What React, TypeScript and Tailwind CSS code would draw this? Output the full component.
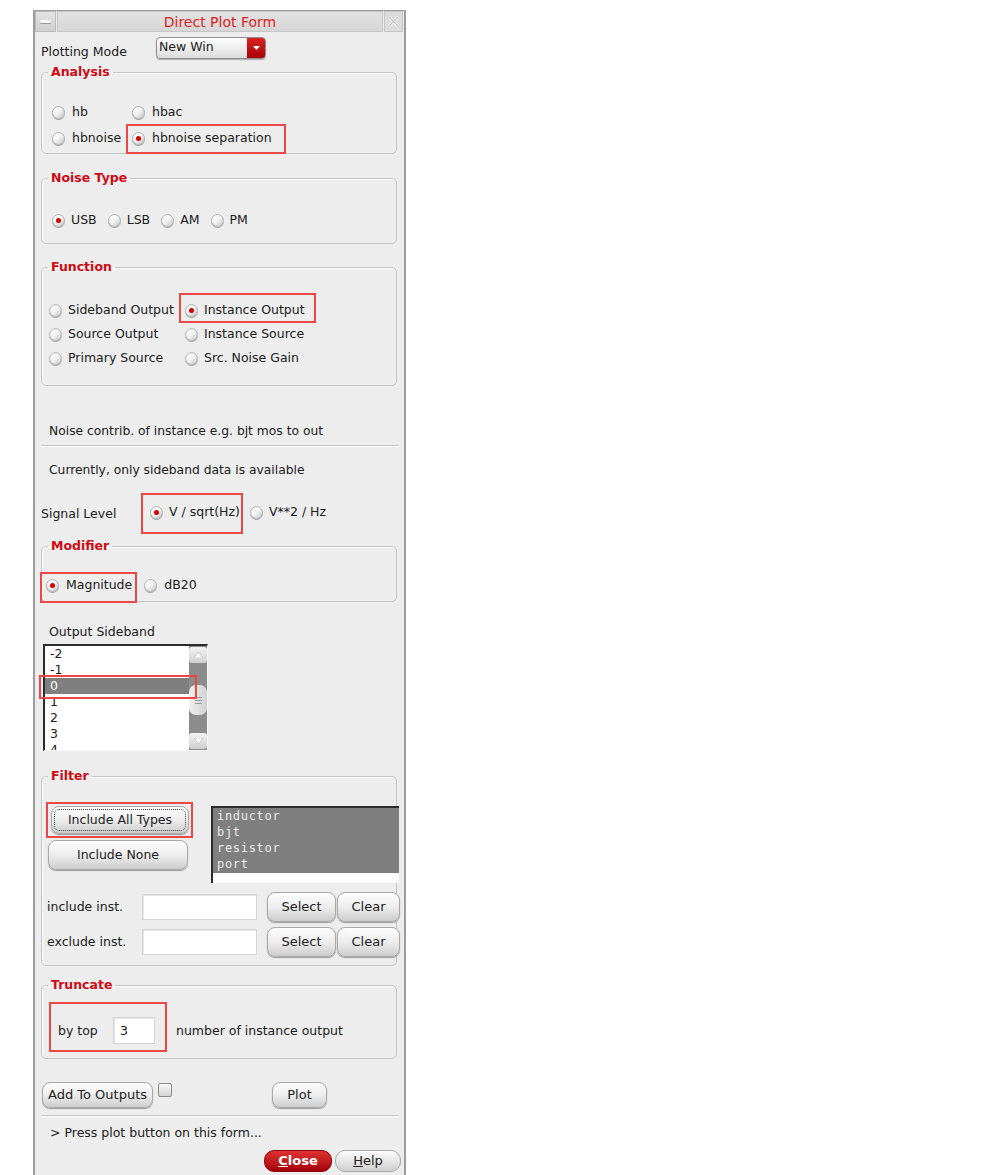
import React from "react";

function Radio({ on = false }: { on?: boolean }) {
  return (
    <span className="flex h-[13px] w-[13px] shrink-0 items-center justify-center rounded-full border border-[#b2b2b2] bg-linear-to-br from-white via-[#f2f2f2] to-[#c4c4c4] shadow-[0_1px_0_#a0a0a0]">
      {on && <span className="h-[5px] w-[5px] rounded-full bg-[#d40000]" />}
    </span>
  );
}

function Option({ label, on = false, gap = "gap-[7px]" }: { label: string; on?: boolean; gap?: string }) {
  return (
    <span className={`flex h-[16px] items-center whitespace-nowrap ${gap}`}>
      <Radio on={on} />
      <span>{label}</span>
    </span>
  );
}

// red annotation box drawn over an item
function Mark({ children, box }: { children: React.ReactNode; box: string }) {
  return (
    <span className="relative inline-flex items-center">
      {children}
      <span className={`pointer-events-none absolute border-2 border-[#ec4747] ${box}`} />
    </span>
  );
}

function Group({ title, className = "", children }: { title: string; className?: string; children: React.ReactNode }) {
  return (
    <fieldset className={`rounded-[5px] border border-[#c4c4c4] shadow-[inset_1px_1px_0_#fafafa] ${className}`}>
      <legend className="ml-[6px] px-[3px] text-[12.5px] font-bold leading-[16px] text-[#cc0a14]">{title}</legend>
      {children}
    </fieldset>
  );
}

function Btn({ className = "", children }: { className?: string; children: React.ReactNode }) {
  return (
    <button
      type="button"
      className={`flex items-center justify-center rounded-[8px] border border-[#a8a8a8] bg-linear-to-b from-[#fdfdfd] via-[#ededed] to-[#cdcdcd] text-[12.5px] text-[#222] shadow-[0_1px_1px_#9c9c9c] ${className}`}
    >
      {children}
    </button>
  );
}

function Field({ className = "", value = "" }: { className?: string; value?: string }) {
  return (
    <div className={`flex items-center border border-[#d6d6d6] bg-white pl-[6px] text-[12.5px] shadow-[inset_1px_1px_0_#e4e4e4] ${className}`}>
      {value}
    </div>
  );
}

export default function App() {
  const sidebands = ["-2", "-1", "0", "1", "2", "3", "4"];
  const types = ["inductor", "bjt", "resistor", "port"];

  return (
    <div className="h-[1175px] w-[989px] overflow-hidden bg-white font-['DejaVu_Sans','Liberation_Sans',sans-serif] text-[12.5px] leading-[16px] text-[#202020]">
      <div className="ml-[33px] mt-[10px] min-h-[1165px] w-[373px] border-x-2 border-t border-[#9c9c9c] bg-[#ededed]">
        {/* Title bar */}
        <div className="flex h-[21px]">
          <div className="flex w-[21px] items-center justify-center border border-[#bcbcbc] bg-linear-to-b from-[#e4e4e4] to-[#cecece]">
            <span className="h-[3px] w-[11px] rounded-[1px] bg-[#f6f6f6] shadow-[0_1px_0_#9a9a9a]" />
          </div>
          <div className="ml-[1px] flex flex-1 items-center justify-center border border-[#c6c6c6] bg-linear-to-b from-[#e2e2e2] to-[#d6d6d6] text-[14px] text-[#dc1e26]">
            Direct Plot Form
          </div>
          <div className="ml-[1px] mr-[1px] flex w-[19px] items-center justify-center border border-[#c6c6c6] bg-[#dcdcdc]">
            <svg width="13" height="13" viewBox="0 0 13 13">
              <path d="M2 2 L11 11 M11 2 L2 11" stroke="#f8f8f8" strokeWidth="3" />
              <path d="M2 2 L11 11 M11 2 L2 11" stroke="#c2c2c2" strokeWidth="1.2" />
            </svg>
          </div>
        </div>

        <div className="pl-[6px] pr-[7px]">
          {/* Plotting mode */}
          <div className="mt-[5px] flex h-[22px]">
            <div className="w-[115px] pt-[7px]">Plotting Mode</div>
            <div className="flex w-[110px] rounded-[4px] border border-[#8e8e8e] bg-linear-to-b from-white to-[#dcdcdc] shadow-[0_1px_1px_#aaa]">
              <span className="flex-1 pl-[2px] pt-[1px]">New Win</span>
              <span className="flex w-[18px] items-center justify-center rounded-r-[3px] bg-linear-to-b from-[#dc2020] to-[#a80008]">
                <svg width="7" height="4" viewBox="0 0 7 4">
                  <path d="M0 0 H7 L3.5 4 Z" fill="#fff" />
                </svg>
              </span>
            </div>
          </div>

          {/* Analysis */}
          <Group title="Analysis" className="mt-[5px] pb-[2px] pt-[19px]">
            <div className="grid grid-cols-[80px_auto] pl-[10px]">
              <div className="flex h-[26px] items-center"><Option label="hb" /></div>
              <div className="flex h-[26px] items-center"><Option label="hbac" /></div>
              <div className="flex h-[26px] items-center"><Option label="hbnoise" /></div>
              <div className="flex h-[26px] items-center">
                <Mark box="left-[-6px] top-[-6px] h-[30px] w-[160px]">
                  <Option label="hbnoise separation" on />
                </Mark>
              </div>
            </div>
          </Group>

          {/* Noise Type */}
          <Group title="Noise Type" className="mt-[16px] pb-[10px] pt-[21px]">
            <div className="flex h-[26px] items-center gap-[11px] pl-[10px]">
              <Option label="USB" on gap="gap-[6px]" />
              <Option label="LSB" gap="gap-[6px]" />
              <Option label="AM" gap="gap-[6px]" />
              <Option label="PM" gap="gap-[6px]" />
            </div>
          </Group>

          {/* Function */}
          <Group title="Function" className="mt-[15px] pb-[15px] pt-[23px]">
            <div className="grid grid-cols-[136px_auto] pl-[7px]">
              <div className="flex h-[24px] items-center"><Option label="Sideband Output" gap="gap-[6px]" /></div>
              <div className="flex h-[24px] items-center">
                <Mark box="left-[-6px] top-[-9px] h-[30px] w-[137px]">
                  <Option label="Instance Output" on gap="gap-[6px]" />
                </Mark>
              </div>
              <div className="flex h-[24px] items-center"><Option label="Source Output" gap="gap-[6px]" /></div>
              <div className="flex h-[24px] items-center"><Option label="Instance Source" gap="gap-[6px]" /></div>
              <div className="flex h-[24px] items-center"><Option label="Primary Source" gap="gap-[6px]" /></div>
              <div className="flex h-[24px] items-center"><Option label="Src. Noise Gain" gap="gap-[6px]" /></div>
            </div>
          </Group>

          <div className="mt-[37px] pl-[8px] text-[12.3px]">Noise contrib. of instance e.g. bjt mos to out</div>
          <div className="mr-[-2px] mt-[6px] h-[2px] border-t border-[#c6c6c6] bg-[#fbfbfb]" />
          <div className="mt-[15px] pl-[8px] text-[12.3px]">Currently, only sideband data is available</div>

          {/* Signal level */}
          <div className="mt-[22px] flex h-[24px] items-center">
            <span className="w-[109px] pt-[3px]">Signal Level</span>
            <Mark box="left-[-9px] top-[-11px] h-[41px] w-[102px]">
              <Option label="V / sqrt(Hz)" on gap="gap-[6px]" />
            </Mark>
            <span className="ml-[10px]"><Option label="V**2 / Hz" gap="gap-[6px]" /></span>
          </div>

          {/* Modifier */}
          <Group title="Modifier" className="mt-[14px] pb-[4px] pt-[19px]">
            <div className="flex h-[24px] items-center pl-[4px]">
              <Mark box="left-[-6px] top-[-5px] h-[31px] w-[97px]">
                <Option label="Magnitude" on />
              </Mark>
              <span className="ml-[12px]"><Option label="dB20" /></span>
            </div>
          </Group>

          {/* Output sideband */}
          <div className="mt-[22px] pl-[8px]">Output Sideband</div>
          <div className="relative ml-[2px] mt-[4px] flex h-[107px] w-[165px] border-b border-l-2 border-r border-t-2 border-b-[#f6f6f6] border-l-[#2c2c2c] border-r-[#f6f6f6] border-t-[#2c2c2c] bg-white">
            <div className="flex-1 overflow-hidden">
              {sidebands.map((s) => (
                <div
                  key={s}
                  className={`h-[16px] pl-[5px] ${s === "0" ? "bg-[#7f7f7f] text-white" : ""}`}
                >
                  {s}
                </div>
              ))}
            </div>
            <div className="flex w-[18px] flex-col bg-[#8c8c8c] pt-[1px]">
              <div className="flex h-[16px] items-center justify-center rounded-[3px] bg-linear-to-b from-[#f4f4f4] to-[#cfcfcf]">
                <svg width="9" height="6" viewBox="0 0 9 6"><path d="M0 6 L4.5 0 L9 6 Z" fill="#fafafa" stroke="#b8b8b8" strokeWidth="0.6" /></svg>
              </div>
              <div className="mt-[22px] flex h-[30px] flex-col items-center justify-center gap-[2px] rounded-[7px] bg-linear-to-r from-[#f0f0f0] to-[#d2d2d2]">
                <span className="h-[1px] w-[7px] bg-[#9a9a9a]" />
                <span className="h-[1px] w-[7px] bg-[#9a9a9a]" />
                <span className="h-[1px] w-[7px] bg-[#9a9a9a]" />
              </div>
              <div className="mt-[18px] flex h-[16px] items-center justify-center rounded-[3px] bg-linear-to-b from-[#f4f4f4] to-[#cfcfcf]">
                <svg width="9" height="6" viewBox="0 0 9 6"><path d="M0 0 L4.5 6 L9 0 Z" fill="#fafafa" stroke="#b8b8b8" strokeWidth="0.6" /></svg>
              </div>
            </div>
            <span className="pointer-events-none absolute left-[-6px] top-[29px] h-[24px] w-[158px] border-2 border-[#ec4747]" />
          </div>

          {/* Filter */}
          <Group title="Filter" className="mt-[17px] pb-[8px] pt-[22px]">
            <div className="flex">
              <div className="flex w-[148px] flex-col">
                <Mark box="left-[4px] top-[-4px] h-[36px] w-[147px]">
                  <Btn className="ml-[9px] h-[28px] w-[138px] rounded-[4px] outline-1 -outline-offset-4 outline-dotted outline-[#444]">
                    Include All Types
                  </Btn>
                </Mark>
                <Btn className="ml-[6px] mt-[6px] h-[30px] w-[140px]">Include None</Btn>
              </div>
              <div className="ml-[21px] mr-[-3px] flex h-[77px] flex-1 flex-col border-l-2 border-t-2 border-[#2c2c2c] bg-white">
                <div className="h-[65px] bg-[#7f7f7f] pl-[4px] font-['DejaVu_Sans_Mono',monospace] text-[12px] tracking-[0.7px] text-[#ececec]">
                  {types.map((t) => (
                    <div key={t} className="h-[16px]">{t}</div>
                  ))}
                </div>
              </div>
            </div>

            <div className="mt-[9px] flex h-[30px] items-center">
              <span className="ml-[5px] w-[95px]">include inst.</span>
              <Field className="h-[26px] w-[115px]" />
              <Btn className="ml-[10px] h-[30px] w-[69px] text-[13px]">Select</Btn>
              <Btn className="ml-[1px] mr-[-5px] h-[30px] w-[63px] text-[13px]">Clear</Btn>
            </div>
            <div className="mt-[5px] flex h-[30px] items-center">
              <span className="ml-[5px] w-[95px]">exclude inst.</span>
              <Field className="h-[26px] w-[115px]" />
              <Btn className="ml-[10px] h-[30px] w-[69px] text-[13px]">Select</Btn>
              <Btn className="ml-[1px] mr-[-5px] h-[30px] w-[63px] text-[13px]">Clear</Btn>
            </div>
          </Group>

          {/* Truncate */}
          <Group title="Truncate" className="mt-[11px] pb-[14px] pt-[24px]">
            <div className="flex h-[27px] items-center pl-[16px]">
              <Mark box="left-[-9px] top-[-15px] h-[50px] w-[118px]">
                <span className="w-[55px]">by top</span>
                <Field className="h-[27px] w-[42px]" value="3" />
              </Mark>
              <span className="ml-[21px]">number of instance output</span>
            </div>
          </Group>

          {/* Bottom buttons */}
          <div className="mt-[23px] flex h-[26px]">
            <Btn className="ml-[1px] h-[26px] w-[111px] text-[13px]">Add To Outputs</Btn>
            <span className="ml-[5px] mt-[1px] h-[14px] w-[14px] rounded-[2px] border border-[#8a8a8a] bg-linear-to-b from-[#f8f8f8] to-[#d4d4d4]" />
            <Btn className="ml-[100px] h-[26px] w-[55px] text-[13px]">Plot</Btn>
          </div>
          <div className="mr-[-2px] mt-[7px] h-[2px] border-t border-[#c6c6c6] bg-[#fbfbfb]" />
          <div className="mt-[8px] pl-[9px]">&gt; Press plot button on this form...</div>
          <div className="mt-[9px] flex h-[22px]">
            <button
              type="button"
              className="ml-[223px] flex h-[22px] w-[68px] items-center justify-center rounded-[10px] border border-[#8a0008] bg-linear-to-b from-[#e03030] to-[#a4000c] text-[13px] font-bold text-white"
            >
              <span className="underline">C</span>lose
            </button>
            <button
              type="button"
              className="ml-[3px] mr-[-5px] flex h-[22px] w-[66px] items-center justify-center rounded-[10px] border border-[#a8a8a8] bg-linear-to-b from-[#fdfdfd] to-[#cfcfcf] text-[13px] text-[#222]"
            >
              <span className="underline">H</span>elp
            </button>
          </div>
        </div>
      </div>
    </div>
  );
}
